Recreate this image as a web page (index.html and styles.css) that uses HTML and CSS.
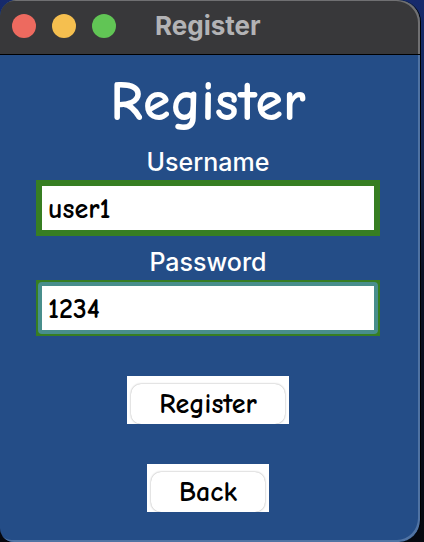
FILE: index.html
```html
<!DOCTYPE html>
<html lang="en">
<head>
<meta charset="utf-8">
<meta name="viewport" content="width=device-width, initial-scale=1">
<title>Register</title>
<link rel="stylesheet" href="styles.css">
</head>
<body>
<div class="window">
  <header class="titlebar">
    <div class="lights">
      <button class="light light-close" type="button" aria-label="Close"></button>
      <button class="light light-minimize" type="button" aria-label="Minimize"></button>
      <button class="light light-zoom" type="button" aria-label="Zoom"></button>
    </div>
    <span class="window-title">Register</span>
  </header>
  <main class="content">
    <h1 class="heading">Register</h1>
    <form class="form">
      <label class="label" for="username">Username</label>
      <div class="field-frame"><input class="field" id="username" type="text" value="user1"></div>
      <label class="label" for="password">Password</label>
      <div class="field-frame"><input class="field field-active" id="password" type="text" value="1234"></div>
      <div class="button-frame"><button class="button" type="button">Register</button></div>
      <div class="button-frame"><button class="button" type="button">Back</button></div>
    </form>
  </main>
</div>
</body>
</html>
```
FILE: styles.css
```css
* {
  box-sizing: border-box;
}

body {
  margin: 0;
  background: linear-gradient(#162a6c, #14254e 30%, #0b1124 50%, #06080f);
  font-family: Inter, "Liberation Sans", sans-serif;
}

.window {
  display: flex;
  flex-direction: column;
  min-height: 100vh;
  margin-right: 3px;
  overflow: hidden;
  background: #244d87;
  border-right: 1px solid #000;
  border-radius: 16px 22px 22px 14px;
  box-shadow: inset -2px -2px #5073a3;
}

.titlebar {
  display: flex;
  align-items: center;
  height: 55px;
  padding: 0 12px 3px;
  background: #38383a;
  border-bottom: 1px solid #000;
  border-radius: 16px 22px 0 0;
  box-shadow: inset -2px 1px #707072;
}

.lights {
  display: flex;
  gap: 16px;
}

.light {
  width: 24px;
  height: 24px;
  padding: 0;
  border: 0;
  border-radius: 50%;
}

.light-close {
  background: #ed6a5f;
}

.light-minimize {
  background: #f5bf4f;
}

.light-zoom {
  background: #61c555;
}

.window-title {
  margin-left: 39px;
  color: #b3b3b5;
  font-size: 26px;
  font-weight: 700;
  line-height: 30px;
}

.content {
  padding: 13px 40px 28px 36px;
}

.heading {
  margin: 0;
  color: #fff;
  font-family: "Comic Sans MS", "Comic Neue", "Open Sans", sans-serif;
  font-size: 56px;
  font-weight: 700;
  line-height: 68px;
  text-align: center;
}

.form {
  display: flex;
  flex-direction: column;
  align-items: center;
}

.label {
  margin-top: 8px;
  color: #fff;
  font-size: 25px;
  font-weight: 500;
  line-height: 36px;
}

.field-frame {
  width: 100%;
  padding: 2px;
  background: #377e22;
}

.field {
  display: block;
  width: 100%;
  height: 52px;
  padding: 2px 6px 0;
  background: #fff;
  border: 4px solid #377e22;
  border-radius: 4px;
  color: #000;
  font-family: "Comic Sans MS", "Comic Neue", "Open Sans", sans-serif;
  font-size: 28px;
  font-weight: 700;
  outline: 0;
}

.field-active {
  border-color: #488e8c;
}

.button-frame {
  height: 48px;
  margin-top: 40px;
  padding: 8px 4px 0;
  overflow: hidden;
  background: #fff;
}

.button {
  display: block;
  height: 40px;
  padding: 0 28px;
  background: #fff;
  border: 0;
  border-radius: 10px;
  box-shadow: 0 0 2px #999;
  color: #000;
  font-family: "Comic Sans MS", "Comic Neue", "Open Sans", sans-serif;
  font-size: 28px;
  font-weight: 700;
  line-height: 40px;
}
```
